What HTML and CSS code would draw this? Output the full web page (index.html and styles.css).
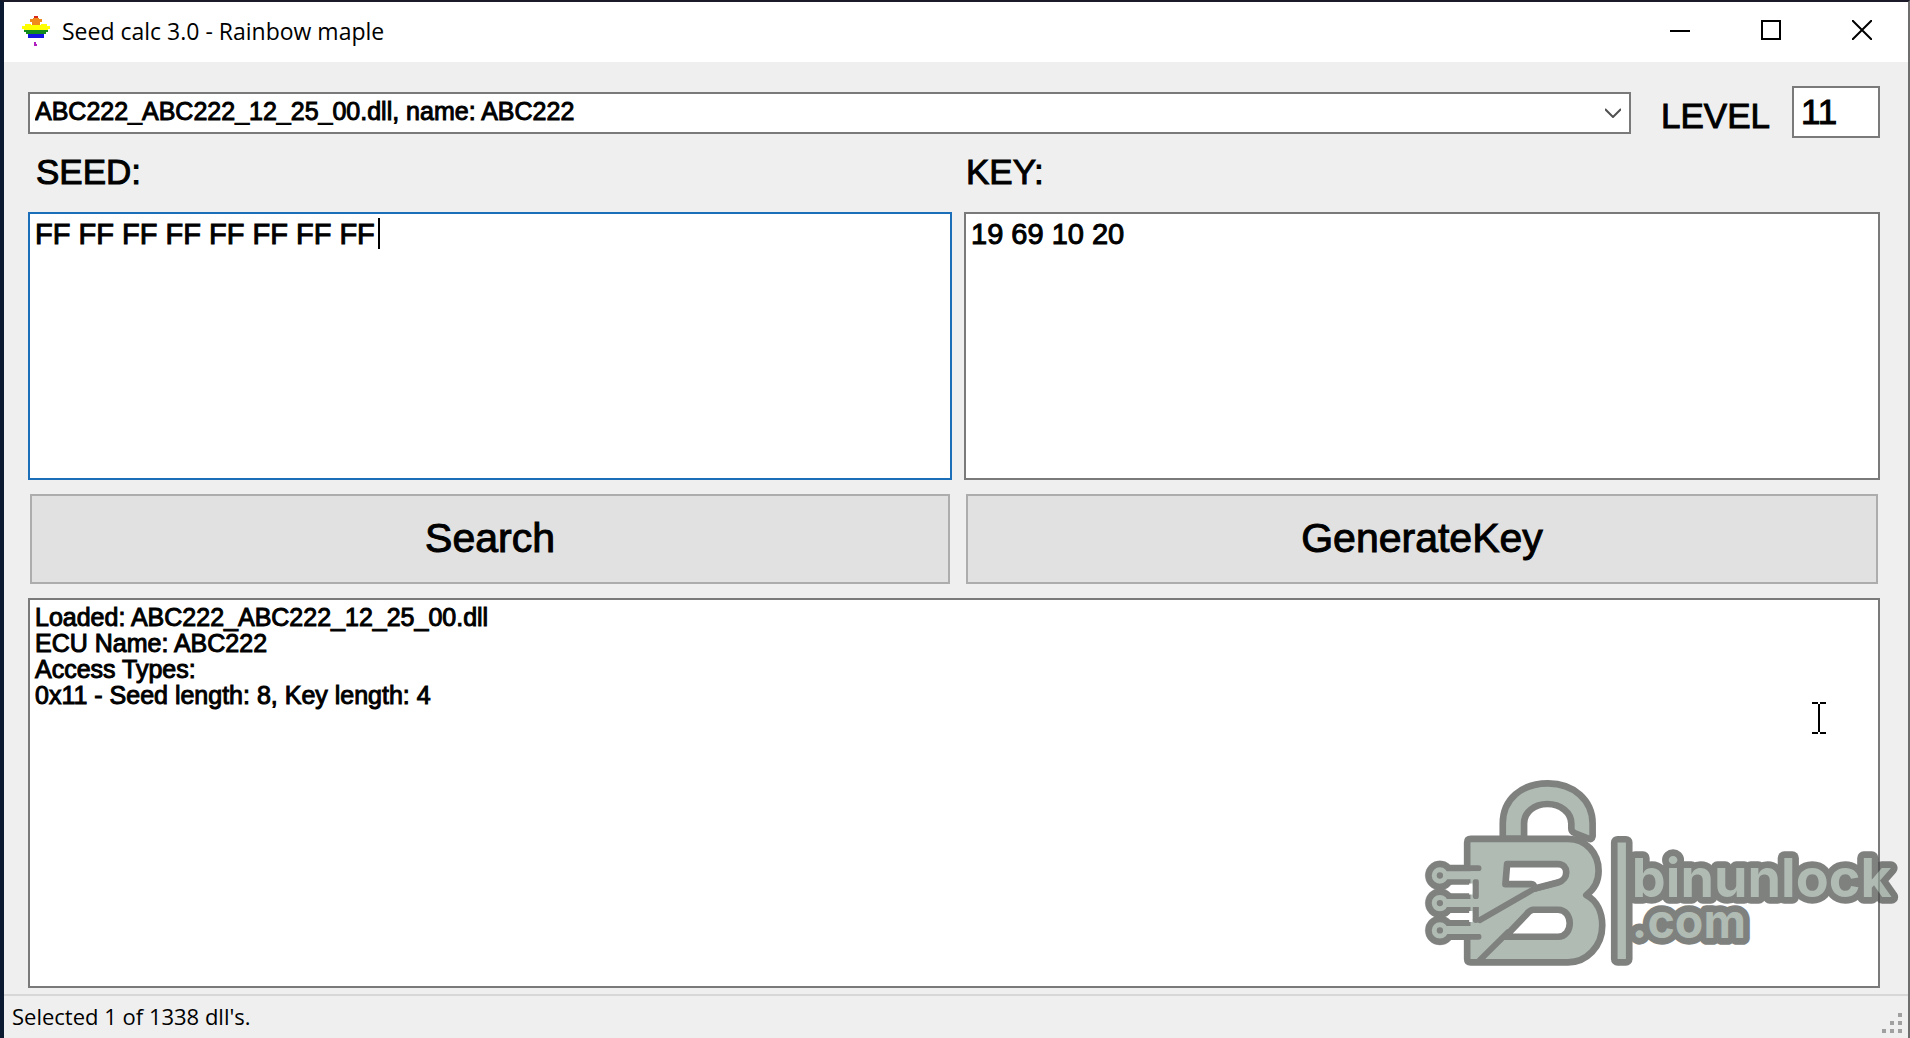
FILE: index.html
```
<!DOCTYPE html>
<html lang="en">
<head>
  <meta charset="UTF-8">
  <meta name="viewport" content="width=device-width, initial-scale=1.0">
  <title>Seed calc 3.0 - Rainbow maple</title>
  <link rel="stylesheet" href="styles.css">
</head>
<body>
  <div class="window">

    <!-- Title bar -->
    <header class="titlebar">
      <svg class="app-icon" viewBox="0 0 28 32" shape-rendering="crispEdges" aria-hidden="true">
        <path fill="#d8281c" d="M12 1h4v2h-4z"/>
        <path fill="#f08a1c" d="M8 4h3V3h6v1h3v3h-2v3h-8V7H8z"/>
        <path fill="#ffff00" d="M3 9h6v1h10V9h6v2h3v3h-2v2H2v-2H0v-3h3z"/>
        <path fill="#128a1c" d="M2 15h24v2h-2v2H4v-2H2z"/>
        <path fill="#1414e0" d="M6 19h16v4H6z"/>
        <path fill="#b020c0" d="M12 27h2v2h1v2h-3z"/>
      </svg>
      <h1 class="title">Seed calc 3.0 - Rainbow maple</h1>
      <div class="window-buttons">
        <button type="button" aria-label="Minimize">
          <svg viewBox="0 0 20 20"><path d="M0 11h20"/></svg>
        </button>
        <button type="button" aria-label="Maximize">
          <svg viewBox="0 0 20 20"><path d="M1 1h18v18H1z"/></svg>
        </button>
        <button type="button" aria-label="Close">
          <svg viewBox="0 0 20 20"><path d="M0 0l20 20M20 0L0 20"/></svg>
        </button>
      </div>
    </header>

    <main class="content">
      <!-- Dll and access level -->
      <div class="dll-row">
        <div class="dll-box">
          <select class="dll-select" aria-label="Dll">
            <option>ABC222_ABC222_12_25_00.dll, name: ABC222</option>
          </select>
          <svg class="arrow" viewBox="0 0 16 10"><path d="M0 1l8 8 8-8"/></svg>
        </div>
        <label class="level-label" for="level">LEVEL</label>
        <input class="level" id="level" type="text" value="11">
      </div>

      <!-- Seed and key -->
      <div class="columns">
        <section class="column">
          <label for="seed">SEED:</label>
          <div class="field">
            <textarea class="active" id="seed" spellcheck="false">FF FF FF FF FF FF FF FF</textarea>
            <span class="caret"></span>
          </div>
          <button type="button" class="action">Search</button>
        </section>
        <section class="column">
          <label for="key">KEY:</label>
          <div class="field">
            <textarea id="key" spellcheck="false">19 69 10 20</textarea>
          </div>
          <button type="button" class="action">GenerateKey</button>
        </section>
      </div>

      <!-- Log -->
      <textarea class="log" aria-label="Log" spellcheck="false" readonly>Loaded: ABC222_ABC222_12_25_00.dll
ECU Name: ABC222
Access Types:
0x11 - Seed length: 8, Key length: 4</textarea>
    </main>

    <!-- Status bar -->
    <footer class="statusbar">
      <span>Selected 1 of 1338 dll's.</span>
      <svg class="grip" viewBox="0 0 20 20" shape-rendering="crispEdges">
        <path d="M16 0h4v4h-4zM8 8h4v4H8zM16 8h4v4h-4zM0 16h4v4H0zM8 16h4v4H8zM16 16h4v4h-4z"/>
      </svg>
    </footer>
  </div>

  <!-- Mouse pointer -->
  <svg class="pointer" viewBox="0 0 14 32" aria-hidden="true">
    <path d="M0 1h6M8 1h6M7 2v28M0 31h6M8 31h6"/>
  </svg>

  <!-- Watermark -->
  <svg class="watermark" viewBox="70 50 1435 580" role="img" aria-label="binunlock.com">
    <g class="mark">
      <!-- shackle -->
      <path class="shape" d="M309 236V190C309 116 366 69 445 69C522 69 579 120 579 190V228Q577 240 566 235L526 219Q515 215 515 205V190C515 156 482 131 443 131C404 131 373 156 373 190V236Z"/>
      <!-- letter body -->
      <path class="shape" fill-rule="evenodd" d="M213 236H505C560 236 597 280 597 332C597 364 584 388 560 405C592 422 608 456 608 496C608 560 560 607 505 607H213Q202 607 202 596V247Q202 236 213 236ZM322 312H475C508 312 508 358 475 367L405 385Q403 372 395 372H317ZM400 449H475C522 449 522 530 475 530H316L380 463Q390 450 400 449Z"/>
      <path class="line" d="M240 480L400 388L475 367M240 600L325 516"/>
      <!-- circuit pins -->
      <path class="hole" d="M140 370h78v33h-78zM140 453h78v33h-78z"/>
      <path class="line" d="M228 365V408M228 441V480M200 324H236M200 530H236"/>
      <g class="pins-back">
        <path d="M120 344H208M120 429H208M120 510H208"/>
        <circle cx="120" cy="346" r="44"/>
        <circle cx="120" cy="429" r="44"/>
        <circle cx="120" cy="511" r="44"/>
      </g>
      <path class="hole" d="M143 387l10-12h64v22h-64zM143 469l10-10h64v18h-64z"/>
      <path class="stem" d="M120 345H248M120 429H248M120 510H248"/>
      <g class="pins">
        <circle cx="120" cy="346" r="17"/>
        <circle cx="120" cy="429" r="17"/>
        <circle cx="120" cy="511" r="17"/>
      </g>
      <rect class="shape" x="644" y="237" width="45" height="370" rx="10"/>
      <text class="name"><tspan x="697" y="410">binunlock</tspan><tspan class="domain" x="697" y="534">.com</tspan></text>
    </g>
  </svg>
</body>
</html>
```
FILE: styles.css
```
* {
  margin: 0;
  padding: 0;
  box-sizing: border-box;
}

body {
  background-color: #0b1a30;
  color: #000;
  font-family: "Liberation Sans", Arial, sans-serif;
  overflow: hidden;
}

input,
select,
textarea,
button {
  font: inherit;
  color: inherit;
  border-radius: 0;
}

.window {
  display: flex;
  flex-direction: column;
  height: 100vh;
  border-style: solid;
  border-width: 2px 2px 0 4px;
  border-color: #1a1a28 #6e6e6e #1a1a28 #0b1a30;
  background-color: #efefef;
}

/* Title bar */
.titlebar {
  display: flex;
  align-items: center;
  height: 60px;
  padding: 0 1px 2px 18px;
  background-color: #fff;
}

.app-icon {
  width: 28px;
  height: 32px;
}

.title {
  flex: 1;
  margin-left: 12px;
  font-family: "Open Sans", sans-serif;
  font-size: 23px;
  font-weight: 400;
}

.window-buttons {
  display: flex;
}

.window-buttons button {
  display: flex;
  align-items: center;
  justify-content: center;
  width: 91px;
  height: 58px;
  padding-bottom: 2px;
  border: none;
  background: none;
}

.window-buttons svg {
  width: 20px;
  height: 20px;
  fill: none;
  stroke: #000;
  stroke-width: 2;
}

/* Content */
.content {
  flex: 1;
  display: flex;
  flex-direction: column;
  min-height: 0;
  padding: 24px 28px 6px 24px;
  -webkit-text-stroke: 1px #000;
}

.dll-row {
  display: flex;
  align-items: center;
  height: 52px;
}

.dll-box {
  position: relative;
  flex: 1;
  margin-top: 2px;
}

.dll-select {
  appearance: none;
  display: block;
  width: 100%;
  height: 42px;
  padding: 0 40px 4px 5px;
  border: 2px solid #7a7a7a;
  background-color: #fff;
  font-size: 25px;
}

.arrow {
  position: absolute;
  top: 16px;
  right: 10px;
  width: 16px;
  height: 10px;
  fill: none;
  stroke: #505050;
  stroke-width: 2;
}

.level-label {
  margin: 8px 22px 0 30px;
  font-size: 35px;
}

.level {
  width: 88px;
  height: 52px;
  padding: 0 7px;
  border: 2px solid #7a7a7a;
  background-color: #fff;
  font-size: 35px;
}

.columns {
  display: grid;
  grid-template-columns: 924fr 916fr;
  gap: 12px;
}

.column {
  display: flex;
  flex-direction: column;
}

.column label {
  padding: 14px 0 0 8px;
  height: 74px;
  font-size: 35px;
  line-height: 40px;
}

.column + .column label {
  padding-left: 2px;
}

.field {
  position: relative;
  height: 268px;
}

textarea {
  display: block;
  width: 100%;
  height: 100%;
  padding: 4px 5px;
  border: 2px solid #7a7a7a;
  background-color: #fff;
  resize: none;
  outline: none;
  font-size: 29px;
  line-height: 32px;
}

textarea.active {
  border-color: #1a6fb8;
}

.caret {
  position: absolute;
  top: 6px;
  left: 350px;
  width: 2px;
  height: 31px;
  background-color: #000;
}

.action {
  height: 90px;
  margin: 14px 2px;
  padding-bottom: 2px;
  border: 2px solid #adadad;
  background-color: #e1e1e1;
  font-size: 41px;
}

.log {
  flex: 1;
  font-size: 25px;
  line-height: 26px;
}

/* Status bar */
.statusbar {
  display: flex;
  align-items: center;
  justify-content: space-between;
  height: 44px;
  padding: 0 6px 2px 8px;
  border-top: 2px solid #d7d7d7;
  font-family: "Open Sans", sans-serif;
  font-size: 22px;
}

.grip {
  width: 20px;
  height: 20px;
  margin-top: 14px;
  fill: #a0a0a0;
}

.pointer {
  position: absolute;
  top: 702px;
  right: 84px;
  width: 14px;
  height: 32px;
  fill: none;
  stroke: #000;
  stroke-width: 2;
}

/* Watermark */
.watermark {
  position: absolute;
  right: 9px;
  bottom: 68px;
  width: 478px;
  height: 193px;
}

.mark {
  opacity: 0.7;
}

.shape {
  fill: #8f9f94;
  stroke: #4a4c4a;
  stroke-width: 20;
  stroke-linejoin: round;
}

.hole {
  fill: #fff;
}

.line {
  fill: none;
  stroke: #4a4c4a;
  stroke-width: 18;
  stroke-linecap: round;
  stroke-linejoin: round;
}

.pins-back {
  fill: #4a4c4a;
  stroke: #4a4c4a;
}

.pins-back path {
  stroke-width: 60;
}

.stem {
  fill: none;
  stroke: #8f9f94;
  stroke-width: 24;
}

.pins {
  fill: #4a4c4a;
  stroke: #8f9f94;
  stroke-width: 15;
}

.name {
  fill: #8f9f94;
  stroke: #4a4c4a;
  stroke-width: 40;
  stroke-linejoin: round;
  paint-order: stroke;
  font-family: Inter, sans-serif;
  font-weight: 700;
  font-size: 162px;
}

.domain {
  font-size: 140px;
}
```
